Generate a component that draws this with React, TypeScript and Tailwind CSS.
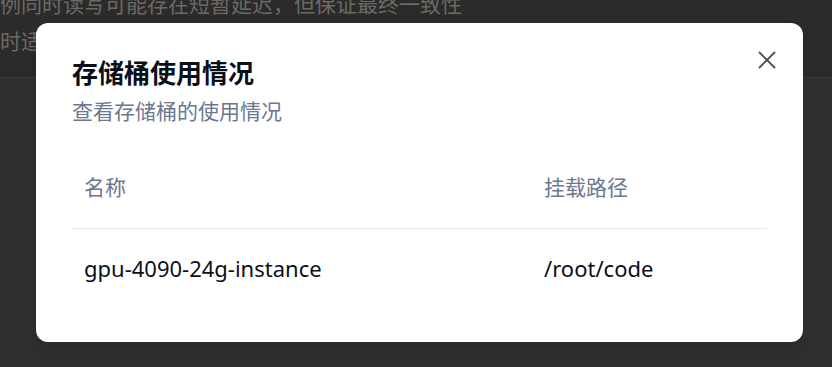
import { X } from "lucide-react";

const rows = [{ name: "gpu-4090-24g-instance", path: "/root/code" }];

export default function App() {
  return (
    <div
      className="relative h-[367px] w-[832px] overflow-hidden bg-[#2f2f2f]"
      style={{ fontFamily: '"Noto Sans", "Noto Sans CJK SC", sans-serif' }}
    >
      {/* dimmed page behind the dialog */}
      <div className="h-[78px] overflow-hidden border-b border-[#3a3936] bg-[#2c2b29] text-[21px] leading-[37px] text-[#6a6966]">
        <p className="-mt-[14px] whitespace-nowrap">例同时读写可能存在短暂延迟，但保证最终一致性</p>
        <p className="whitespace-nowrap">时适用于多实例共享数据的场景</p>
      </div>

      <div className="absolute left-[36px] top-[23px] h-[319px] w-[767px] rounded-xl bg-white px-9 pt-[32px] shadow-lg">
        <button className="absolute right-[21px] top-[22px] flex h-[30px] w-[30px] items-center justify-center text-[#4b5060]">
          <X className="h-[30px] w-[30px]" strokeWidth={1.5} />
        </button>

        <h2 className="text-[26px] font-bold leading-[36px] text-[#0b0f19]">存储桶使用情况</h2>
        <p className="mt-[2px] text-[21px] leading-[36px] text-[#6b7890]">查看存储桶的使用情况</p>

        <table className="mt-[19px] w-full text-left text-[21px]">
          <thead>
            <tr className="border-b border-[#e2e8f0]">
              <th className="h-[80px] w-[460px] px-3 font-normal text-[#6b7890]">名称</th>
              <th className="h-[80px] px-3 font-normal text-[#6b7890]">挂载路径</th>
            </tr>
          </thead>
          <tbody>
            {rows.map((r) => (
              <tr key={r.name}>
                <td className="h-[80px] px-3 text-[22px] text-[#0b0f19]">{r.name}</td>
                <td className="h-[80px] px-3 text-[22px] text-[#0b0f19]">{r.path}</td>
              </tr>
            ))}
          </tbody>
        </table>
      </div>
    </div>
  );
}
